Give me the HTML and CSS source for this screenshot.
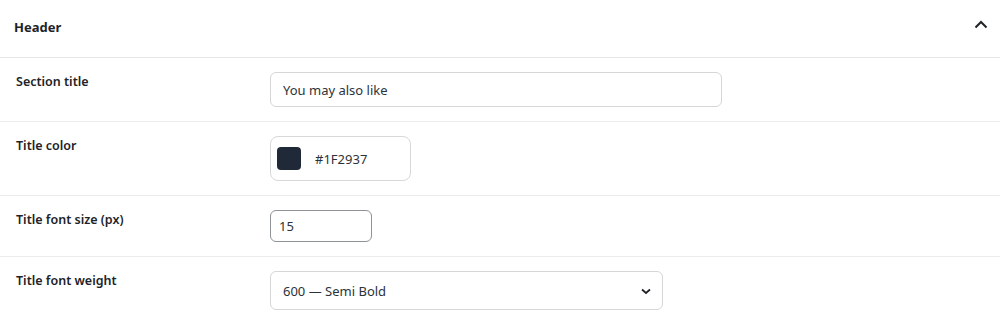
FILE: index.html
```html
<!DOCTYPE html>
<html lang="en">
<head>
<meta charset="utf-8">
<title>Header settings</title>
<link rel="stylesheet" href="styles.css">
</head>
<body>
<section class="panel">
  <div class="panel-head">
    <h2 class="panel-title">Header</h2>
    <button class="toggle" type="button" aria-label="Collapse">
      <svg width="16" height="16" viewBox="0 0 16 16" aria-hidden="true"><path d="M2.5 10.5 L8 5 L13.5 10.5" fill="none" stroke="#1d2327" stroke-width="2"/></svg>
    </button>
  </div>
  <div class="row">
    <label class="label" for="st">Section title</label>
    <div class="control"><input id="st" class="text wide" type="text" value="You may also like"></div>
  </div>
  <div class="row">
    <label class="label">Title color</label>
    <div class="control">
      <div class="color">
        <span class="swatch"></span>
        <span class="hex">#1F2937</span>
      </div>
    </div>
  </div>
  <div class="row">
    <label class="label" for="fs">Title font size (px)</label>
    <div class="control"><input id="fs" class="text num" type="text" value="15"></div>
  </div>
  <div class="row">
    <label class="label" for="fw">Title font weight</label>
    <div class="control">
      <div class="select">
        <span>600 — Semi Bold</span>
        <svg width="12" height="12" viewBox="0 0 12 12" aria-hidden="true"><path d="M2 4.5 L6 8 L10 4.5" fill="none" stroke="#1d2327" stroke-width="1.8"/></svg>
      </div>
    </div>
  </div>
</section>
</body>
</html>
```
FILE: styles.css
```css
* { box-sizing: border-box; }
html, body { margin: 0; padding: 0; background: #fff; }
body {
  font-family: "Noto Sans", "Open Sans", sans-serif;
  color: #1d2327;
  width: 1000px;
}
.panel { background: #fff; }
.panel-head {
  height: 58px;
  border-bottom: 1px solid #e6e6e6;
  display: flex;
  align-items: center;
  justify-content: space-between;
  padding: 0 11px 4px 14px;
}
.panel-title {
  margin: 0;
  font-size: 13px;
  font-weight: 700;
  line-height: 20px;
  color: #1d2327;
}
.toggle {
  border: 0;
  background: none;
  padding: 0;
  width: 16px;
  height: 16px;
  margin-bottom: 4px;
  display: flex;
}
.row {
  display: grid;
  grid-template-columns: 270px 1fr;
  align-items: start;
  padding: 14px 0;
  border-bottom: 1px solid #ececec;
}
.label {
  padding: 0 0 0 16px;
  font-size: 12.5px;
  font-weight: 600;
  line-height: 20px;
  color: #1d2327;
  margin-top: 0;
}
.control { display: flex; }
.text {
  font-family: inherit;
  font-size: 13px;
  color: #2c3338;
  border: 1px solid #d6d6d8;
  border-radius: 6px;
  padding: 0 12px;
  height: 35px;
  outline: none;
  background: #fff;
}
.wide { width: 452px; }
.num { width: 102px; height: 32px; border-color: #8f9296; padding: 0 8px; }
.color {
  width: 141px;
  height: 45px;
  border: 1px solid #d8d8da;
  border-radius: 8px;
  display: flex;
  align-items: center;
  padding: 0 0 0 6px;
  gap: 14px;
}
.swatch {
  width: 24px;
  height: 23px;
  border-radius: 4px;
  background: #1f2937;
}
.hex { font-size: 13px; color: #2c3338; }
.select {
  width: 393px;
  height: 39px;
  border: 1px solid #d6d6d8;
  border-radius: 6px;
  display: flex;
  align-items: center;
  justify-content: space-between;
  padding: 0 10px 0 12px;
  font-size: 13px;
  color: #2c3338;
}
```
